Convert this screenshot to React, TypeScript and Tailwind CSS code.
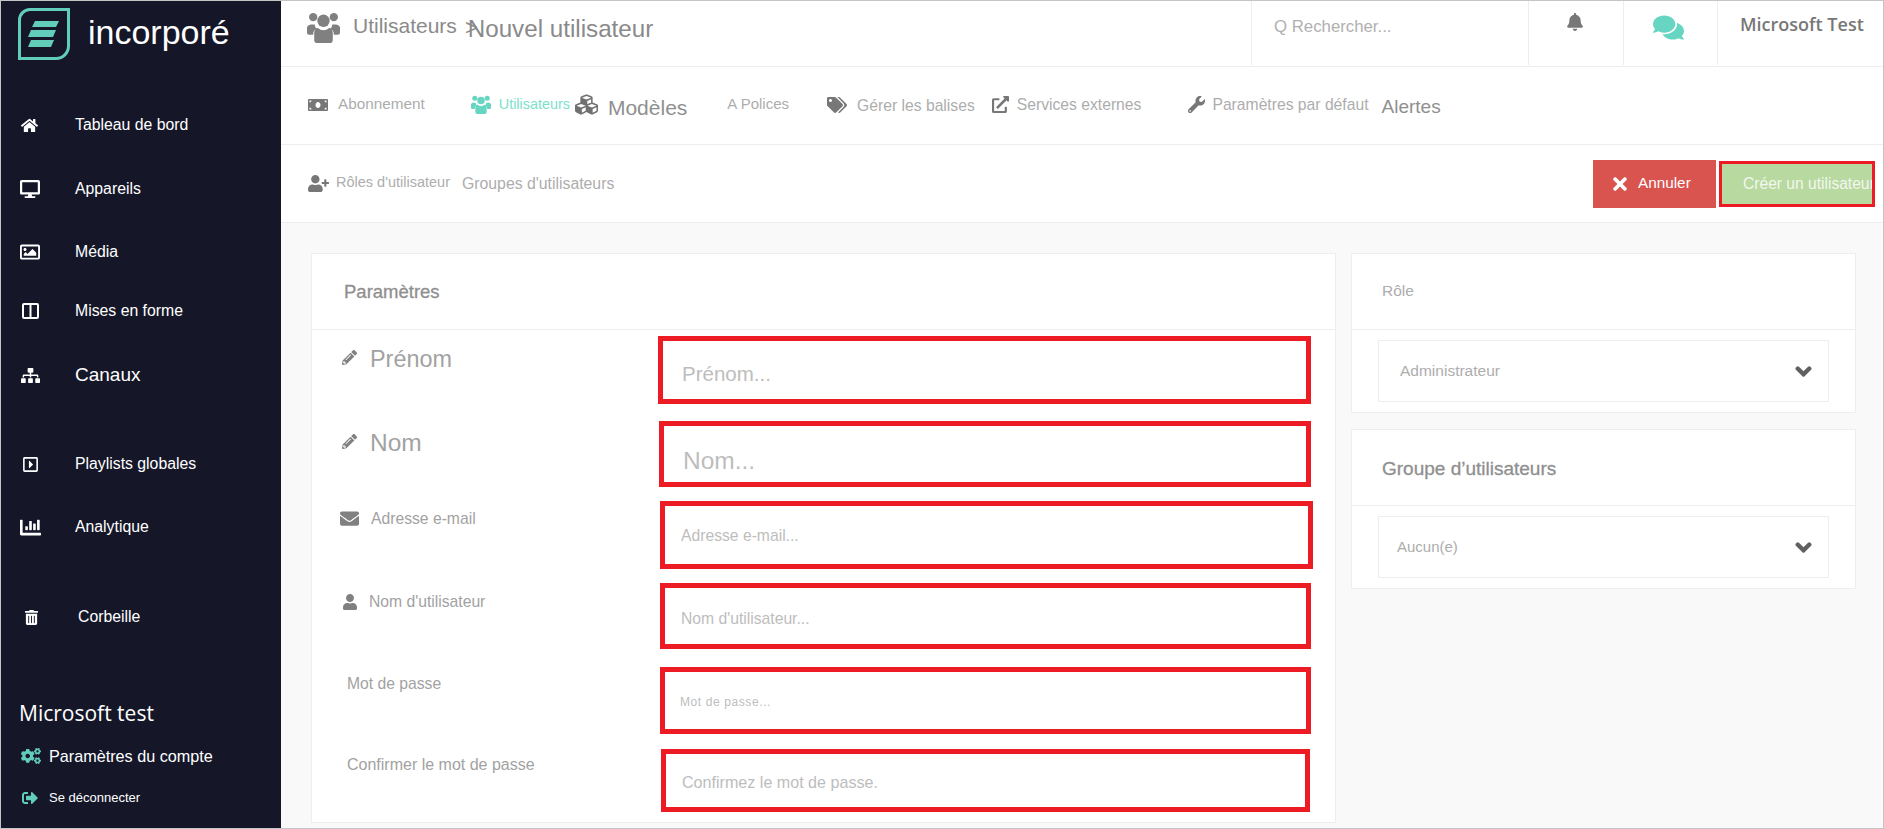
import {
  FaBell, FaChartBar, FaChevronDown, FaCogs, FaComments, FaCubes, FaDesktop, FaEnvelope,
  FaExternalLinkAlt, FaHome, FaMoneyBill, FaPencilAlt, FaRegCaretSquareRight, FaRegImage, FaSignOutAlt,
  FaSitemap, FaTags, FaTimes, FaTrashAlt, FaUser, FaUserPlus, FaWrench,
} from "react-icons/fa";

const Logo = () => (
  <svg width="52" height="52" viewBox="0 0 52 52" fill="none">
    <path d="M12 1.5H50.5V38a12.5 12.5 0 0 1-12.5 12.5H1.5V12A10.5 10.5 0 0 1 12 1.5Z" stroke="#62cdb9" strokeWidth="3" />
    <path d="M17 13H41L38 19H14ZM13 22H38L35 29H10ZM13 32H36L33 39H10Z" fill="#62cdb9" />
  </svg>
);

// three heads, the middle one in front, as in the reference's group icon
const UsersIcon = ({ className }: { className: string }) => (
  <svg viewBox="0 0 32 30" fill="currentColor" className={className}>
    <circle cx="6" cy="5" r="4" />
    <circle cx="26" cy="5" r="4" />
    <circle cx="16" cy="8.5" r="6" />
    <path d="M0 17a4 4 0 0 1 4-5h3.5a8 8 0 0 0 1.5 4a7 7 0 0 0-3 6H2a2 2 0 0 1-2-2ZM32 17a4 4 0 0 0-4-5h-3.5a8 8 0 0 1-1.5 4a7 7 0 0 1 3 6h4a2 2 0 0 0 2-2Z" />
    <path d="M10.5 15.5a8 8 0 0 0 11 0c2.500 0 3.500 2 3.500 5V27a3 3 0 0 1-3 3H10a3 3 0 0 1-3-3v-6.500c0-3 1-5 3.500-5Z" />
  </svg>
);

const ColumnsIcon = () => (
  <svg width="17" height="16" viewBox="0 0 17 16" fill="none" stroke="currentColor" strokeWidth="2">
    <rect x="1" y="1" width="15" height="14" rx="1" />
    <path d="M8.500 1V15" />
  </svg>
);

const navTop = [
  { icon: <FaHome size={17} />, label: "Tableau de bord", row: "mt-[49px] h-[32px]", box: "w-[57px]", text: "ml-[17px]" },
  { icon: <FaDesktop size={20} />, label: "Appareils", row: "mt-[32px] h-[32px]", box: "w-[57px]", text: "ml-[17px]" },
  { icon: <FaRegImage size={20} />, label: "Média", row: "mt-[31px] h-[32px]", box: "w-[57px]", text: "ml-[17px]" },
  { icon: <ColumnsIcon />, label: "Mises en forme", row: "mt-[27px] h-[32px]", box: "w-[58px]", text: "ml-[16px]" },
];

const navBottom = [
  { icon: <FaRegCaretSquareRight size={17} />, label: "Playlists globales", row: "mt-[57px] h-[32px]", text: "ml-[16px]", box: "w-[58px]" },
  { icon: <FaChartBar size={21} />, label: "Analytique", row: "mt-[31px] h-[32px]", text: "ml-[16px]", box: "w-[58px]" },
  { icon: <FaTrashAlt size={15} />, label: "Corbeille", row: "mt-[58px] h-[32px]", text: "ml-[17px]", box: "w-[60px]" },
];

const fields = [
  {
    label: "Prénom", icon: <FaPencilAlt size={15} className="-mt-1" />, placeholder: "Prénom...",
    row: "mt-[6px] h-[68px]", labelBox: "ml-[30px] mt-[6px] gap-[13px] text-[23.4px]",
    box: "ml-[346px] w-[653px]", input: "pl-[19px] pt-[8px] text-[20.5px]",
  },
  {
    label: "Nom", icon: <FaPencilAlt size={15} className="-mt-1" />, placeholder: "Nom...",
    row: "mt-[17px] h-[66px]", labelBox: "ml-[30px] mt-[4px] gap-[13px] text-[24.5px]",
    box: "ml-[347px] w-[652px]", input: "pl-[19px] pt-[13px] text-[24.5px]",
  },
  {
    label: "Adresse e-mail", icon: <FaEnvelope size={19} />, placeholder: "Adresse e-mail...",
    row: "mt-[14px] h-[68px]", labelBox: "ml-[28px] mt-[6px] gap-[12px] text-[15.7px]",
    box: "ml-[348px] w-[653px]", input: "pl-[16px] pt-[2px] text-[15.7px]",
  },
  {
    label: "Nom d'utilisateur", icon: <FaUser size={16} />, placeholder: "Nom d'utilisateur...",
    row: "mt-[14px] h-[66px]", labelBox: "ml-[30px] mt-[7px] gap-[11px] text-[15.7px]",
    box: "ml-[348px] w-[651px]", input: "pl-[16px] pt-[5px] text-[15.7px]",
  },
  {
    label: "Mot de passe", icon: null, placeholder: "Mot de passe...",
    row: "mt-[18px] h-[67px]", labelBox: "ml-[35px] mt-[5px] text-[15.7px]",
    box: "ml-[348px] w-[651px]", input: "pl-[15px] pt-[2px] text-[12px] tracking-[0.6px]",
  },
  {
    label: "Confirmer le mot de passe", icon: null, placeholder: "Confirmez le mot de passe.",
    row: "mt-[15px] h-[63px]", labelBox: "ml-[35px] mt-[4px] text-[16px]",
    box: "ml-[349px] w-[649px]", input: "pl-[16px] pt-[4px] text-[16.1px]",
  },
];

export default function App() {
  return (
    <div className="flex h-[829px] w-[1884px] overflow-hidden border border-[#c4c4c4] bg-[#f9f9f9] font-['Liberation_Sans',sans-serif]">
      <aside className="flex w-[280px] shrink-0 flex-col bg-[#151729] text-white">
        <div className="flex items-center pl-[17px] pt-[7px]">
          <Logo />
          <span className="ml-[18px] -mt-[4px] text-[34px] leading-[44px]">incorporé</span>
        </div>
        {navTop.map((item) => (
          <div key={item.label} className={`flex items-center ${item.row}`}>
            <div className={`flex justify-center ${item.box}`}>{item.icon}</div>
            <span className={`text-[15.8px] ${item.text}`}>{item.label}</span>
          </div>
        ))}
        <div className="mt-[32px] flex h-[32px] items-center">
          <div className="flex w-[58px] justify-center">
            <FaSitemap size={19} />
          </div>
          <span className="ml-[16px] text-[19px]">Canaux</span>
        </div>
        {navBottom.map((item) => (
          <div key={item.label} className={`flex items-center ${item.row}`}>
            <div className={`flex justify-center ${item.box}`}>{item.icon}</div>
            <span className={`text-[15.8px] ${item.text}`}>{item.label}</span>
          </div>
        ))}
        <div className="mt-[66px] pl-[18px] font-['Open_Sans',sans-serif] text-[21px] leading-[28px]">Microsoft test</div>
        <div className="mt-[15px] flex h-[28px] items-center pl-[20px]">
          <FaCogs size={20} className="text-[#62cdb9]" />
          <span className="ml-[8px] text-[16.2px]">Paramètres du compte</span>
        </div>
        <div className="mt-[14px] flex h-[28px] items-center pl-[21px]">
          <FaSignOutAlt size={16} className="text-[#62cdb9]" />
          <span className="ml-[11px] text-[13px]">Se déconnecter</span>
        </div>
      </aside>

      <main className="flex min-w-0 flex-1 flex-col">
        <header className="flex h-[66px] shrink-0 items-start border-b border-[#eeeeee] bg-white text-[#8a8a8a]">
          <div className="flex flex-1 items-start pl-[26px] pt-[11px]">
            <UsersIcon className="h-[31px] w-[33px] text-[#808080]" />
            <span className="ml-[13px] -mt-[2px] text-[21px]">Utilisateurs</span>
            <span className="ml-[8px] -mt-[1px] text-[22px]">&gt;</span>
            <span className="-ml-[10px] -mt-[1px] text-[24.2px]">Nouvel utilisateur</span>
          </div>
          <div className="flex h-[64px] w-[277px] items-start border-l border-[#eeeeee] pl-[22px] pt-[13px] text-[16.8px] text-[#b0b0b0]">
            Q Rechercher...
          </div>
          <div className="flex h-[64px] w-[95px] justify-center border-l border-[#eeeeee] pr-[2px] pt-[12px]">
            <FaBell size={18} className="text-[#777777]" />
          </div>
          <div className="flex h-[64px] w-[94px] justify-center border-l border-[#eeeeee] pt-[11px] pr-[4px]">
            <FaComments size={31} className="text-[#66d5c1]" />
          </div>
          <div className="h-[64px] w-[166px] border-l border-[#eeeeee] pl-[22px] pt-[10px] font-['Open_Sans',sans-serif] text-[18px] font-semibold text-[#777777]">
            Microsoft Test
          </div>
        </header>

        <nav className="flex h-[78px] shrink-0 items-center border-b border-[#eeeeee] bg-white pb-[2px] pl-[27px] text-[15.3px] text-[#adadad]">
          <FaMoneyBill size={20} className="text-[#777777]" />
          <span className="ml-[10px]">Abonnement</span>
          <UsersIcon className="ml-[46px] h-[19px] w-[20px] text-[#66d5c1]" />
          <span className="ml-[8px] text-[14.4px] text-[#7ce0cd]">Utilisateurs</span>
          <FaCubes size={23} className="ml-[5px] text-[#707070]" />
          <span className="ml-[10px] mt-[6px] text-[21px] text-[#8f8f8f]">Modèles</span>
          <span className="ml-[40px] text-[15px]">A Polices</span>
          <FaTags size={20} className="ml-[38px] text-[#777777]" />
          <span className="ml-[10px] mt-[3px] text-[15.7px]">Gérer les balises</span>
          <FaExternalLinkAlt size={17} className="ml-[17px] text-[#777777]" />
          <span className="ml-[8px] text-[15.7px]">Services externes</span>
          <FaWrench size={17} className="ml-[47px] text-[#777777]" />
          <span className="ml-[7px] mt-[1px] text-[15.7px]">Paramètres par défaut</span>
          <span className="ml-[13px] mt-[6px] text-[19px] text-[#8f8f8f]">Alertes</span>
        </nav>

        <div className="flex h-[78px] shrink-0 items-center border-b border-[#eeeeee] bg-white pl-[27px] text-[15.3px] text-[#adadad]">
          <FaUserPlus size={21} className="text-[#777777]" />
          <span className="ml-[7px] mb-[1px] text-[14.5px]">Rôles d'utilisateur</span>
          <span className="ml-[12px] text-[15.8px]">Groupes d'utilisateurs</span>
          <button className="ml-auto flex h-[48px] w-[123px] items-center bg-[#d9534f] pl-[17px] text-white">
            <FaTimes size={20} />
            <span className="ml-[8px]">Annuler</span>
          </button>
          <button className="ml-[3px] mr-[8px] h-[46px] w-[156px] overflow-hidden whitespace-nowrap border-[3px] border-[#ed1c24] bg-[#b8d9a0] pl-[21px] text-left text-[15.6px] text-[#f2f7ee]">
            Créer un utilisateur
          </button>
        </div>

        <div className="flex flex-1 items-start gap-[15px] pl-[30px] pt-[30px]">
          <section className="h-[570px] w-[1025px] border border-[#eeeeee] bg-white">
            <h2 className="flex h-[76px] items-center border-b border-[#eeeeee] pl-[32px] text-[18.5px] text-[#8f8f8f] [-webkit-text-stroke:0.3px]">
              Paramètres
            </h2>
            {fields.map((f) => (
              <div key={f.label} className={`relative flex items-start text-[#a2a2a2] ${f.row}`}>
                <label className={`absolute flex items-center whitespace-nowrap ${f.labelBox}`}>
                  {f.icon && <span className="text-[#808080]">{f.icon}</span>}
                  {f.label}
                </label>
                <input
                  readOnly
                  placeholder={f.placeholder}
                  className={`h-full border-[5px] border-[#ed1c24] bg-white outline-none placeholder:text-[#bdbdbd] ${f.box} ${f.input}`}
                />
              </div>
            ))}
          </section>

          <div className="flex w-[505px] flex-col gap-[16px]">
            <section className="h-[160px] border border-[#eeeeee] bg-white">
              <h2 className="flex h-[76px] items-center border-b border-[#eeeeee] pb-[2px] pl-[30px] text-[15.5px] text-[#adadad]">Rôle</h2>
              <div className="mx-[26px] mt-[10px] flex h-[62px] items-center justify-between border border-[#eeeeee] pl-[21px] pr-[16px] text-[15.5px] text-[#adadad]">
                Administrateur
                <FaChevronDown size={17} stroke="#606060" strokeWidth={50} className="text-[#606060]" />
              </div>
            </section>
            <section className="h-[160px] border border-[#eeeeee] bg-white">
              <h2 className="flex h-[76px] items-center border-b border-[#eeeeee] pl-[30px] pt-[3px] text-[19px] text-[#8f8f8f] [-webkit-text-stroke:0.3px]">
                Groupe d’utilisateurs
              </h2>
              <div className="mx-[26px] mt-[10px] flex h-[62px] items-center justify-between border border-[#eeeeee] pl-[18px] pr-[16px] text-[15px] text-[#adadad]">
                Aucun(e)
                <FaChevronDown size={17} stroke="#606060" strokeWidth={50} className="text-[#606060]" />
              </div>
            </section>
          </div>
        </div>
      </main>
    </div>
  );
}
